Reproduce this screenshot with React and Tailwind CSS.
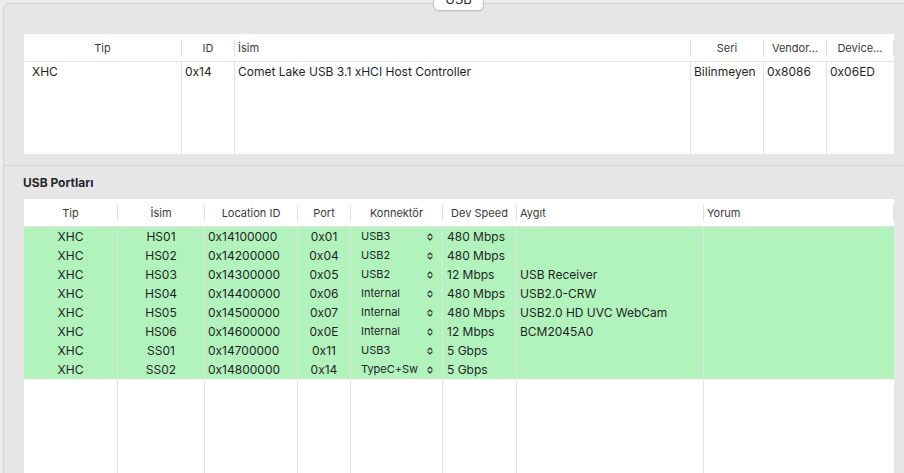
import React from "react";

function Arrows() {
  return (
    <svg width="6" height="10" viewBox="0 0 6 10" className="shrink-0">
      <path d="M1 4 L3 2 L5 4" fill="none" stroke="#3a3a3a" strokeWidth="1.2" strokeLinecap="round" strokeLinejoin="round" />
      <path d="M1 6 L3 8 L5 6" fill="none" stroke="#3a3a3a" strokeWidth="1.2" strokeLinecap="round" strokeLinejoin="round" />
    </svg>
  );
}

function HCell({ w, align, children }) {
  return (
    <div className={`flex items-center h-full ${w}`}>
      <div className={`flex-1 flex ${align} px-[3px] pt-[2px] whitespace-nowrap overflow-hidden`}>{children}</div>
      <div className="w-px h-[16px] bg-[#e1e1e1] shrink-0" />
    </div>
  );
}

const t1cols = [
  { w: "w-[158px]", h: "justify-center", b: "justify-start pl-[8px]" },
  { w: "w-[53px]", h: "justify-center", b: "justify-start pl-[3px]" },
  { w: "w-[456px]", h: "justify-start", b: "justify-start pl-[3px]" },
  { w: "w-[73px]", h: "justify-center", b: "justify-start pl-[3px]" },
  { w: "w-[63px]", h: "justify-center", b: "justify-start pl-[3px]" },
  { w: "flex-1", h: "justify-center", b: "justify-start pl-[3px]" },
];

const t1head = ["Tip", "ID", "İsim", "Seri", "Vendor…", "Device…"];
const t1row = ["XHC", "0x14", "Comet Lake USB 3.1 xHCI Host Controller", "Bilinmeyen", "0x8086", "0x06ED"];

const t2cols = [
  { w: "w-[94px]", h: "justify-center", b: "justify-center" },
  { w: "w-[87px]", h: "justify-center", b: "justify-center" },
  { w: "w-[93px]", h: "justify-center", b: "justify-start pl-[3px]" },
  { w: "w-[53px]", h: "justify-center", b: "justify-center" },
  { w: "w-[92px]", h: "justify-center", b: "justify-between pl-[10px] pr-[9px]" },
  { w: "w-[74px]", h: "justify-center", b: "justify-start pl-[4px]" },
  { w: "w-[187px]", h: "justify-start", b: "justify-start pl-[3px]" },
  { w: "flex-1", h: "justify-start", b: "justify-start pl-[3px]" },
];

const t2head = ["Tip", "İsim", "Location ID", "Port", "Konnektör", "Dev Speed", "Aygıt", "Yorum"];

const t2rows = [
  ["XHC", "HS01", "0x14100000", "0x01", "USB3", "480 Mbps", "", ""],
  ["XHC", "HS02", "0x14200000", "0x04", "USB2", "480 Mbps", "", ""],
  ["XHC", "HS03", "0x14300000", "0x05", "USB2", "12 Mbps", "USB Receiver", ""],
  ["XHC", "HS04", "0x14400000", "0x06", "Internal", "480 Mbps", "USB2.0-CRW", ""],
  ["XHC", "HS05", "0x14500000", "0x07", "Internal", "480 Mbps", "USB2.0 HD UVC WebCam", ""],
  ["XHC", "HS06", "0x14600000", "0x0E", "Internal", "12 Mbps", "BCM2045A0", ""],
  ["XHC", "SS01", "0x14700000", "0x11", "USB3", "5 Gbps", "", ""],
  ["XHC", "SS02", "0x14800000", "0x14", "TypeC+Sw", "5 Gbps", "", ""],
];

function BCell({ col, last, children, className = "" }) {
  return (
    <div
      className={`flex items-center whitespace-nowrap overflow-hidden ${col.w} ${col.b} ${
        last ? "" : "border-r border-[#e2e2e2]"
      } ${className}`}
    >
      {children}
    </div>
  );
}

export default function App() {
  return (
    <div className="relative w-[904px] h-[473px] overflow-hidden bg-[#ececec] pl-[3px] pt-[3px] font-['Inter','Liberation_Sans',sans-serif] text-[#1f1f1f]">
      <div className="w-[930px] h-[520px] border border-[#d5d5d5] rounded-tl-[6px] bg-[#e6e6e6] flex flex-col">
        {/* Top pane */}
        <div className="h-[161px] pt-[30px] pl-[20px] shrink-0">
          <div className="w-[870px] h-[120px] bg-white flex flex-col">
            <div className="h-[28px] flex border-b border-[#e2e2e2] text-[11px] text-[#3a3a3a] shrink-0">
              {t1cols.map((c, i) => (
                <HCell key={i} w={c.w} align={c.h}>
                  {t1head[i]}
                </HCell>
              ))}
            </div>
            <div className="h-[19px] flex text-[12px] shrink-0">
              {t1cols.map((c, i) => (
                <BCell key={i} col={c} last={i === t1cols.length - 1}>
                  {t1row[i]}
                </BCell>
              ))}
            </div>
            <div className="flex-1 flex">
              {t1cols.map((c, i) => (
                <BCell key={i} col={c} last={i === t1cols.length - 1} />
              ))}
            </div>
          </div>
        </div>

        {/* Bottom pane */}
        <div className="flex-1 border-t border-[#d3d3d3] flex flex-col">
          <div className="h-[33px] flex items-center pl-[19px] text-[12px] font-bold text-[#262626] shrink-0">
            USB Portları
          </div>
          <div className="ml-[20px] w-[870px] h-[300px] bg-white flex flex-col">
            <div className="h-[28px] flex border-b border-[#e2e2e2] text-[11px] text-[#3a3a3a] shrink-0">
              {t2cols.map((c, i) => (
                <HCell key={i} w={c.w} align={c.h}>
                  {t2head[i]}
                </HCell>
              ))}
            </div>
            {t2rows.map((r, ri) => (
              <div key={ri} className="h-[19px] flex text-[12px] bg-[#b2f3bd] shrink-0">
                {t2cols.map((c, i) => (
                  <BCell key={i} col={c} last={i === t2cols.length - 1}>
                    {i === 4 ? (
                      <>
                        <span className="text-[11px]">{r[i]}</span>
                        <Arrows />
                      </>
                    ) : (
                      r[i]
                    )}
                  </BCell>
                ))}
              </div>
            ))}
            <div className="flex-1 flex">
              {t2cols.map((c, i) => (
                <BCell key={i} col={c} last={i === t2cols.length - 1} />
              ))}
            </div>
          </div>
        </div>
      </div>

      {/* Tab button */}
      <div className="absolute left-[433px] top-[-12px] w-[51px] h-[23px] rounded-[6px] border border-[#c5c5c5] bg-white shadow-[0_1px_1px_rgba(0,0,0,0.08)] flex items-center justify-center text-[13px] text-[#2a2a2a]">
        USB
      </div>
    </div>
  );
}
